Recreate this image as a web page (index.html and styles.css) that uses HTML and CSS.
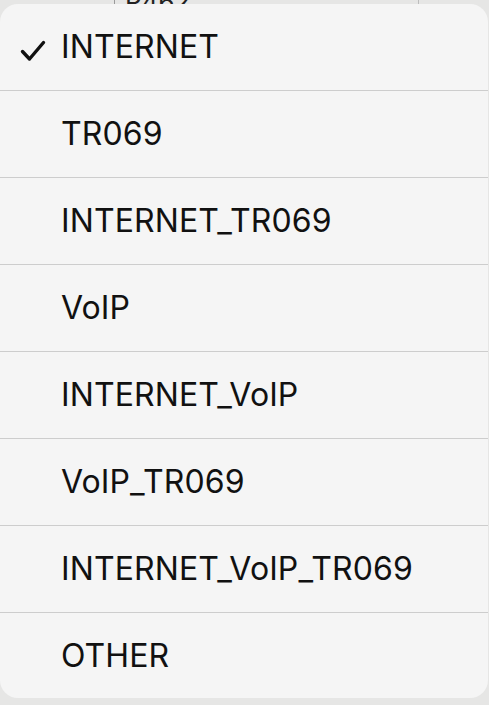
FILE: index.html
```html
<!DOCTYPE html>
<html lang="en">
<head>
    <meta charset="UTF-8">
    <meta name="viewport" content="width=device-width, initial-scale=1.0">
    <title>Service list</title>
    <link rel="stylesheet" href="styles.css">
</head>
<body>
    <div class="backdrop">
        <div class="field">P462</div>
    </div>
    <ul class="menu">
        <li class="menu-item selected">
            <svg class="check" width="26" height="22" viewBox="0 0 26 22">
                <path d="M2.5 11.5 L9.5 19 L23.5 2.5" fill="none" stroke="#111" stroke-width="3.4" stroke-linecap="round" stroke-linejoin="round"/>
            </svg>
            INTERNET
        </li>
        <li class="menu-item">TR069</li>
        <li class="menu-item">INTERNET_TR069</li>
        <li class="menu-item">VoIP</li>
        <li class="menu-item">INTERNET_VoIP</li>
        <li class="menu-item">VoIP_TR069</li>
        <li class="menu-item">INTERNET_VoIP_TR069</li>
        <li class="menu-item">OTHER</li>
    </ul>
</body>
</html>
```

FILE: styles.css
```css
* {
    margin: 0;
    padding: 0;
    box-sizing: border-box;
    font-family: "Inter", "Liberation Sans", sans-serif;
}

:root {
    --bg-color: #e6e6e5;
    --card-bg: #f5f5f5;
    --line: #cdcdcd;
    --text: #111;
}

body {
    background-color: var(--bg-color);
    width: 489px;
    height: 705px;
    overflow: hidden;
}

.backdrop {
    height: 4px;
    overflow: hidden;
    padding-left: 114px;
}

.field {
    width: 305px;
    height: 4px;
    border-left: 1px solid #9a9a9a;
    border-right: 1px solid #bdbdbd;
    padding-left: 10px;
    font-size: 26px;
    line-height: 4px;
    color: #222;
    display: flex;
    align-items: flex-end;
    overflow: hidden;
}

.menu {
    list-style: none;
    background-color: var(--card-bg);
    width: 488px;
    border-radius: 18px;
    overflow: hidden;
}

.menu-item {
    height: 87px;
    display: flex;
    align-items: center;
    padding-left: 61px;
    padding-bottom: 1px;
    font-size: 32px;
    letter-spacing: 0.1px;
    color: var(--text);
    border-bottom: 1px solid var(--line);
    position: relative;
}

.menu-item:last-child {
    border-bottom: none;
    height: 85px;
}

.check {
    position: absolute;
    left: 20px;
    top: 36px;
}
```
